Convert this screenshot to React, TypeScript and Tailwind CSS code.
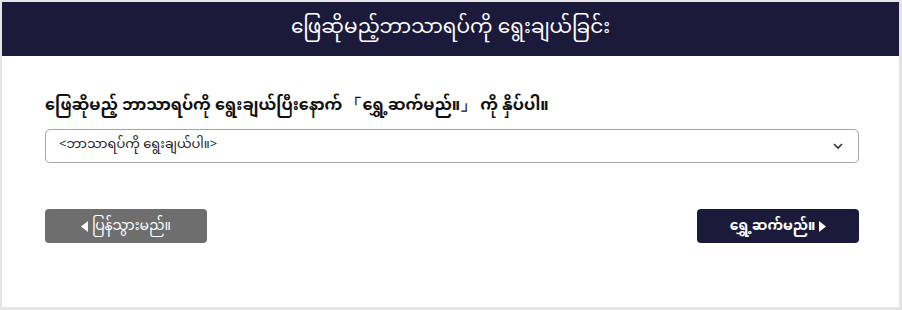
import React from "react";

const mm = { fontFamily: '"Noto Sans Myanmar", "Myanmar Text", Padauk, "Noto Sans", sans-serif' };

export default function App() {
  return (
    <div className="w-[902px] h-[310px] bg-white" style={mm}>
      <div className="h-full border-l-2 border-t-2 border-r-[3px] border-b-[3px] border-[#e4e4e4] flex flex-col">
        <div className="h-[54px] bg-[#1b1a3b] flex items-center justify-center">
          <h1 className="text-white text-[20px] leading-none">ဖြေဆိုမည့်ဘာသာရပ်ကို ရွေးချယ်ခြင်း</h1>
        </div>
        <div className="pl-[43px] pr-[40px] pt-[38px]">
          <p className="text-[16px] font-bold text-[#111] leading-[26px]">
            ဖြေဆိုမည့် ဘာသာရပ်ကို ရွေးချယ်ပြီးနောက် 「ရွှေ့ဆက်မည်။」 ကို နှိပ်ပါ။
          </p>
          <div className="mt-[9px] h-[34px] border border-[#a5a5a5] rounded-[5px] flex items-center justify-between pl-[13px] pr-[14px]">
            <span className="text-[13px] text-[#222]">&lt;ဘာသာရပ်ကို ရွေးချယ်ပါ။&gt;</span>
            <svg width="12" height="8" viewBox="0 0 12 8" fill="none" stroke="#333" strokeWidth="1.6">
              <path d="M2 2l4 4 4-4" />
            </svg>
          </div>
          <div className="mt-[46px] flex justify-between">
            <button className="w-[162px] h-[34px] rounded-[4px] bg-[#6e6e6e] text-white text-[14px] flex items-center justify-center gap-[4px]">
              <svg width="7" height="11" viewBox="0 0 7 11"><path d="M7 0L0 5.5 7 11z" fill="#fff" /></svg>
              ပြန်သွားမည်။
            </button>
            <button className="w-[162px] h-[34px] rounded-[4px] bg-[#1b1a3b] text-white text-[14px] font-bold flex items-center justify-center gap-[4px]">
              ရွှေ့ဆက်မည်။
              <svg width="7" height="11" viewBox="0 0 7 11"><path d="M0 0l7 5.5L0 11z" fill="#fff" /></svg>
            </button>
          </div>
        </div>
      </div>
    </div>
  );
}
